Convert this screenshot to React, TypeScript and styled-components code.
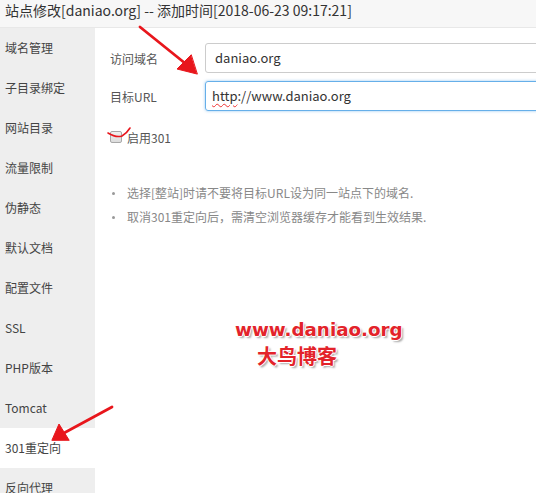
import React from "react";
import styled, { createGlobalStyle } from "styled-components";

const Global = createGlobalStyle`
  html, body { margin: 0; padding: 0; background: #fff; }
  body { font-family: "Noto Sans CJK SC", "Noto Sans", sans-serif; overflow: hidden; }
  * { box-sizing: border-box; }
`;

const Page = styled.div`
  position: relative;
  width: 536px;
  height: 493px;
  overflow: hidden;
  display: flex;
  flex-direction: column;
`;

const TitleBar = styled.div`
  height: 28px;
  flex: 0 0 28px;
  background: #f7f7f7;
  border-bottom: 1px solid #e8e8e8;
  color: #333;
  font-size: 14px;
  line-height: 21px;
  padding-left: 5px;
  white-space: nowrap;
`;

const Body = styled.div`
  flex: 1;
  display: flex;
  min-height: 0;
`;

const Sidebar = styled.ul`
  width: 95px;
  flex: 0 0 95px;
  margin: 0;
  padding: 0;
  list-style: none;
  background: #eeeeee;
`;

const NavItem = styled.li<{ $active?: boolean }>`
  height: 40px;
  line-height: 40px;
  padding-left: 5px;
  font-size: 12px;
  color: #444;
  background: ${(p) => (p.$active ? "#ffffff" : "transparent")};
  white-space: nowrap;
`;

const Content = styled.div`
  flex: 1;
  padding: 15px 0 0 15px;
  overflow: hidden;
`;

const FormRow = styled.div`
  display: flex;
  align-items: center;
  height: 30px;
  margin-bottom: 8px;
`;

const Label = styled.span`
  width: 95px;
  flex: 0 0 95px;
  font-size: 12px;
  color: #555;
`;

const Input = styled.div<{ $focus?: boolean }>`
  flex: 0 0 360px;
  height: 30px;
  border: 1px solid ${(p) => (p.$focus ? "#66afe9" : "#cccccc")};
  border-radius: 3px;
  box-shadow: ${(p) => (p.$focus ? "0 0 3px rgba(102,175,233,0.7)" : "none")};
  padding-left: ${(p) => (p.$focus ? "6px" : "9px")};
  font-size: 13px;
  line-height: 28px;
  color: #333;
`;

const Spell = styled.span`
  text-decoration: underline wavy #e33;
  text-decoration-thickness: 1px;
  text-underline-offset: 2px;
`;

const CheckRow = styled.label`
  display: flex;
  align-items: center;
  margin-top: 16px;
  height: 20px;
  font-size: 12px;
  color: #555;
  gap: 5px;
`;

const Box = styled.span`
  width: 12px;
  height: 12px;
  border: 1px solid #a8a8a8;
  border-radius: 2px;
  background: linear-gradient(#f0f0f0, #dcdcdc);
`;

const Notes = styled.ul`
  margin: 34px 0 0 0;
  padding: 0;
  list-style: none;
`;

const Note = styled.li`
  position: relative;
  padding-left: 17px;
  height: 24px;
  line-height: 24px;
  font-size: 12px;
  color: #888;
  white-space: nowrap;
  &::before {
    content: "";
    position: absolute;
    left: 2px;
    top: 11px;
    width: 3px;
    height: 3px;
    border-radius: 50%;
    background: #999;
  }
`;

const Watermark = styled.div`
  position: absolute;
  left: 235px;
  top: 317px;
  color: #e3232a;
  font-weight: bold;
  text-shadow: 1px 0 0 #fff, -1px 0 0 #fff, 0 1px 0 #fff, 0 -1px 0 #fff,
    2px 2px 2px rgba(0, 0, 0, 0.35);
`;

const WmUrl = styled.div`
  font-family: "DejaVu Sans", sans-serif;
  font-size: 18.3px;
  line-height: 26px;
`;

const WmName = styled.div`
  font-family: "Noto Sans CJK SC", sans-serif;
  font-size: 20px;
  line-height: 26px;
  padding-left: 22px;
`;

const Overlay = styled.svg`
  position: absolute;
  left: 0;
  top: 0;
  pointer-events: none;
`;

const navItems = [
  "域名管理",
  "子目录绑定",
  "网站目录",
  "流量限制",
  "伪静态",
  "默认文档",
  "配置文件",
  "SSL",
  "PHP版本",
  "Tomcat",
  "301重定向",
  "反向代理",
];

export default function App() {
  return (
    <>
      <Global />
      <Page>
        <TitleBar>站点修改[daniao.org] -- 添加时间[2018-06-23 09:17:21]</TitleBar>
        <Body>
          <Sidebar>
            {navItems.map((n) => (
              <NavItem key={n} $active={n === "301重定向"}>
                {n}
              </NavItem>
            ))}
          </Sidebar>
          <Content>
            <FormRow>
              <Label>访问域名</Label>
              <Input>daniao.org</Input>
            </FormRow>
            <FormRow>
              <Label>目标URL</Label>
              <Input $focus>
                <Spell>http</Spell>://www.daniao.org
              </Input>
            </FormRow>
            <CheckRow>
              <Box />
              启用301
            </CheckRow>
            <Notes>
              <Note>选择[整站]时请不要将目标URL设为同一站点下的域名.</Note>
              <Note>取消301重定向后，需清空浏览器缓存才能看到生效结果.</Note>
            </Notes>
          </Content>
        </Body>
        <Watermark>
          <WmUrl>www.daniao.org</WmUrl>
          <WmName>大鸟博客</WmName>
        </Watermark>
        <Overlay width="536" height="493" viewBox="0 0 536 493">
          <g fill="#e8161c" stroke="#e8161c" strokeLinecap="round">
            <line x1="140" y1="27" x2="186" y2="64" strokeWidth="2.8" />
            <polygon points="197,74 177,69 191,55" />
            <line x1="112" y1="407" x2="64" y2="433" strokeWidth="2.8" />
            <polygon points="52,440 59,424 69,440" />
          </g>
          <path
            d="M108 133 Q116 138 122 136 Q127 133 130 128"
            fill="none"
            stroke="#e8161c"
            strokeWidth="1.6"
            strokeLinecap="round"
          />
        </Overlay>
      </Page>
    </>
  );
}
